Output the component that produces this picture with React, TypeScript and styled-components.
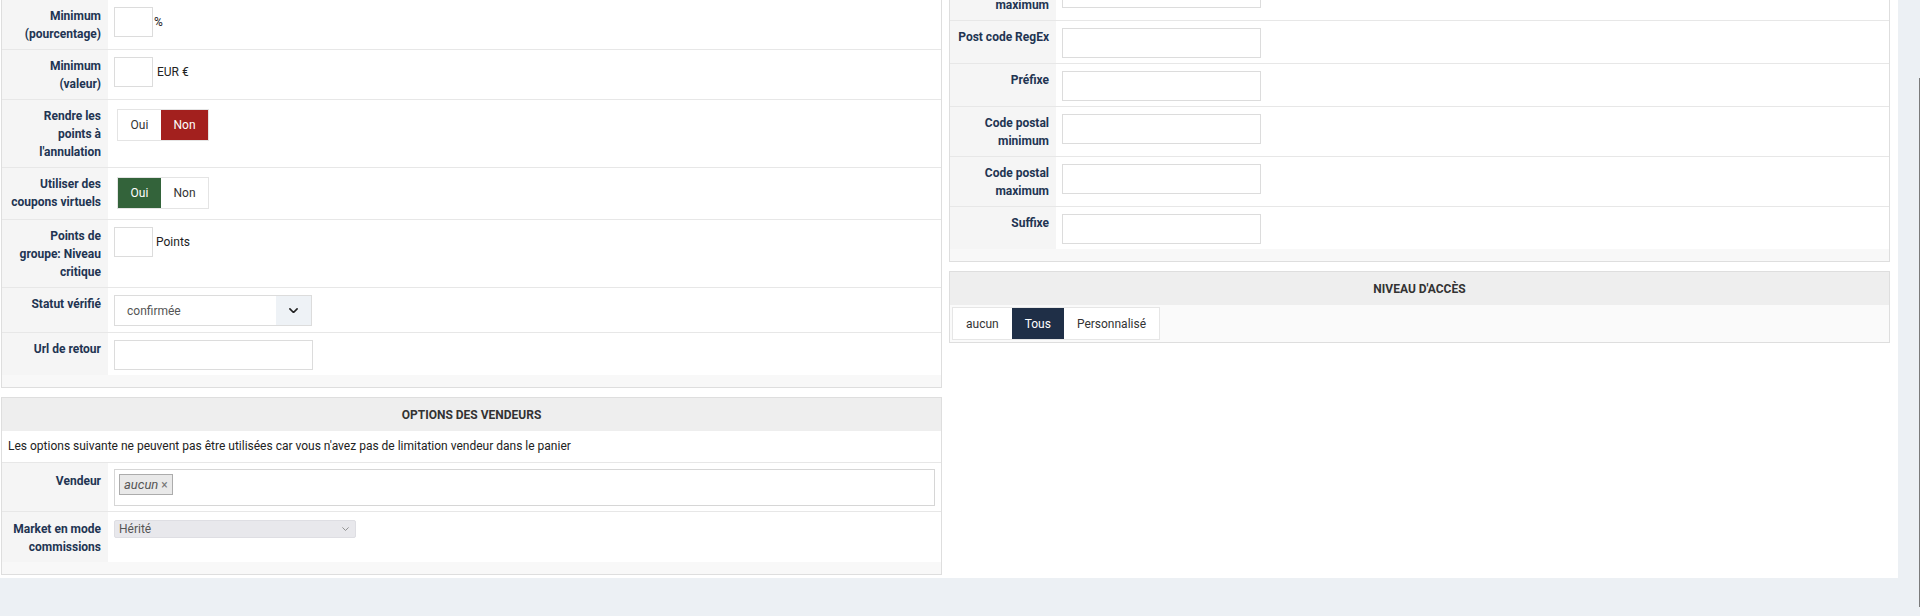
import React from 'react'
import styled, { createGlobalStyle } from 'styled-components'

const GlobalStyle = createGlobalStyle`
  html, body {
    margin: 0;
    padding: 0;
  }
  body {
    background: #ecf0f4;
    font-family: Roboto, 'Liberation Sans', Arial, sans-serif;
    font-size: 12px;
    color: #333;
    overflow: hidden;
  }
`

const Page = styled.div`
  display: flex;
  height: 616px;
`

const Main = styled.main`
  width: 1898px;
  height: 578px;
  flex-shrink: 0;
  background: #fff;
  overflow: hidden;
  box-sizing: border-box;
  padding-left: 1px;
  display: grid;
  grid-template-columns: 941px 941px;
  column-gap: 7px;
  align-items: start;
`

const Gutter = styled.div`
  flex: 1;
  display: flex;
  justify-content: flex-end;
  padding-top: 78px;
`

const ScrollThumb = styled.div`
  width: 1px;
  height: 529px;
  background: #7b7b7b;
`

const Column = styled.div<{ $shift: number }>`
  display: flex;
  flex-direction: column;
  gap: 9px;
  margin-top: ${p => -p.$shift}px;
`

const Panel = styled.section`
  border: 1px solid #dedede;
  background: #fff;
`

const PanelHeader = styled.div`
  height: 33px;
  background: #eeeeee;
  display: flex;
  align-items: center;
  justify-content: center;
  font-weight: 700;
  color: #333;
  text-transform: uppercase;
`

const PanelFooter = styled.div`
  height: 12px;
  background: #f8f8f8;
`

const FieldRow = styled.div`
  display: grid;
  grid-template-columns: 106px 1fr;
  & + & {
    border-top: 1px solid #e7e7e7;
  }
`

const Label = styled.div<{ $top?: number }>`
  background: #f5f5f5;
  padding: ${p => p.$top ?? 7}px 7px 6px 6px;
  text-align: right;
  font-weight: 700;
  line-height: 18px;
  color: #223452;
  white-space: pre-line;
`

const Value = styled.div<{ $top?: number }>`
  padding: ${p => p.$top ?? 7}px 6px 5px 6px;
  display: flex;
  align-items: flex-start;
`

const InputWrap = styled.div`
  display: flex;
  align-items: center;
`

const TextInput = styled.input<{ $w: number }>`
  width: ${p => p.$w}px;
  height: 30px;
  box-sizing: border-box;
  border: 1px solid #dcdcdc;
  background: #fff;
  margin: 0;
  padding: 0 8px;
  font: inherit;
  outline: none;
`

const Unit = styled.span<{ $gap: number }>`
  margin-left: ${p => p.$gap}px;
  color: #222;
`

const Toggle = styled.div`
  display: inline-flex;
  border: 1px solid #e4e4e4;
  margin: 2px 3px 5px;
  background: #fff;
`

const ToggleButton = styled.span<{ $w: number; $bg?: string }>`
  width: ${p => p.$w}px;
  height: 30px;
  display: flex;
  align-items: center;
  justify-content: center;
  background: ${p => p.$bg ?? '#fff'};
  color: ${p => (p.$bg ? '#fff' : '#333')};
`

const SelectBox = styled.div`
  width: 198px;
  height: 31px;
  box-sizing: border-box;
  border: 1px solid #dcdcdc;
  display: flex;
  margin-bottom: 1px;
`

const SelectText = styled.span`
  flex: 1;
  display: flex;
  align-items: center;
  padding-left: 12px;
  color: #555;
`

const SelectArrow = styled.span`
  width: 35px;
  background: #eef2f6;
  display: flex;
  align-items: center;
  justify-content: center;
`

const NativeSelect = styled.div`
  width: 242px;
  height: 18px;
  box-sizing: border-box;
  background: #e8e8ec;
  border: 1px solid #dedee3;
  border-radius: 2px;
  display: flex;
  align-items: center;
  justify-content: space-between;
  padding: 0 6px 0 4px;
  color: #555;
`

const Notice = styled.div`
  padding: 6px 6px 7px;
  line-height: 18px;
  color: #222;
  border-bottom: 1px solid #e7e7e7;
`

const MultiBox = styled.div`
  flex: 1;
  height: 37px;
  box-sizing: border-box;
  border: 1px solid #d6d6d6;
  padding: 4px;
`

const Tag = styled.span`
  display: inline-flex;
  align-items: center;
  gap: 3px;
  height: 21px;
  box-sizing: border-box;
  padding: 0 4px;
  border: 1px solid #acacac;
  background: #e9e9e9;
  font-style: italic;
  font-size: 13px;
  color: #555;
`

const TagRemove = styled.span`
  font-style: normal;
  font-size: 12px;
  color: #777;
`

const AccessBody = styled.div`
  padding: 2px;
  background: #fafafa;
`

const ButtonGroup = styled.div`
  display: inline-flex;
  border: 1px solid #e6e6e6;
  background: #fff;
`

const GroupButton = styled.span<{ $active?: boolean }>`
  height: 31px;
  padding: 0 13px;
  display: flex;
  align-items: center;
  background: ${p => (p.$active ? '#1f2f47' : '#fff')};
  color: ${p => (p.$active ? '#fff' : '#333')};
`

const Chevron = ({ size = 10, color = '#222', weight = 1.8 }: { size?: number; color?: string; weight?: number }) => (
  <svg width={size} height={size * 0.6} viewBox="0 0 10 6" fill="none">
    <polyline points="1,1 5,5 9,1" stroke={color} strokeWidth={weight} strokeLinecap="round" strokeLinejoin="round" />
  </svg>
)

const YesNo = ({ value }: { value: boolean }) => (
  <Toggle>
    <ToggleButton $w={43} $bg={value ? '#33633a' : undefined}>Oui</ToggleButton>
    <ToggleButton $w={47} $bg={value ? undefined : '#a3201e'}>Non</ToggleButton>
  </Toggle>
)

const Field = ({ label, children }: { label: string; children: React.ReactNode }) => (
  <FieldRow>
    <Label>{label}</Label>
    <Value>{children}</Value>
  </FieldRow>
)

const zipFields = ['Quantité\nmaximum', 'Post code RegEx', 'Préfixe', 'Code postal\nminimum', 'Code postal\nmaximum', 'Suffixe']

export default function App() {
  return (
    <>
      <GlobalStyle />
      <Page>
        <Main>
          <Column $shift={1}>
            <Panel>
              <Field label={'Minimum\n(pourcentage)'}>
                <InputWrap>
                  <TextInput $w={39} readOnly />
                  <Unit $gap={1}>%</Unit>
                </InputWrap>
              </Field>
              <Field label={'Minimum\n(valeur)'}>
                <InputWrap>
                  <TextInput $w={39} readOnly />
                  <Unit $gap={4}>EUR €</Unit>
                </InputWrap>
              </Field>
              <Field label={'Rendre les\npoints à\nl\'annulation'}>
                <YesNo value={false} />
              </Field>
              <Field label={'Utiliser des\ncoupons virtuels'}>
                <YesNo value={true} />
              </Field>
              <Field label={'Points de\ngroupe: Niveau\ncritique'}>
                <InputWrap>
                  <TextInput $w={39} readOnly />
                  <Unit $gap={3}>Points</Unit>
                </InputWrap>
              </Field>
              <Field label="Statut vérifié">
                <SelectBox>
                  <SelectText>confirmée</SelectText>
                  <SelectArrow>
                    <Chevron size={9} />
                  </SelectArrow>
                </SelectBox>
              </Field>
              <Field label="Url de retour">
                <TextInput $w={199} readOnly />
              </Field>
              <PanelFooter />
            </Panel>

            <Panel>
              <PanelHeader>Options des vendeurs</PanelHeader>
              <Notice>
                Les options suivante ne peuvent pas être utilisées car vous n'avez pas de limitation vendeur dans le panier
              </Notice>
              <FieldRow>
                <Label $top={9}>Vendeur</Label>
                <Value $top={6}>
                  <MultiBox>
                    <Tag>
                      aucun<TagRemove>×</TagRemove>
                    </Tag>
                  </MultiBox>
                </Value>
              </FieldRow>
              <FieldRow>
                <Label $top={8}>{'Market en mode\ncommissions'}</Label>
                <Value $top={8}>
                  <NativeSelect>
                    <span>Hérité</span>
                    <Chevron size={7} color="#888" weight={1.3} />
                  </NativeSelect>
                </Value>
              </FieldRow>
              <PanelFooter />
            </Panel>
          </Column>

          <Column $shift={30}>
            <Panel>
              {zipFields.map(label => (
                <Field key={label} label={label}>
                  <TextInput $w={199} readOnly />
                </Field>
              ))}
              <PanelFooter />
            </Panel>

            <Panel>
              <PanelHeader>Niveau d'accès</PanelHeader>
              <AccessBody>
                <ButtonGroup>
                  <GroupButton>aucun</GroupButton>
                  <GroupButton $active>Tous</GroupButton>
                  <GroupButton>Personnalisé</GroupButton>
                </ButtonGroup>
              </AccessBody>
            </Panel>
          </Column>
        </Main>
        <Gutter>
          <ScrollThumb />
        </Gutter>
      </Page>
    </>
  )
}
